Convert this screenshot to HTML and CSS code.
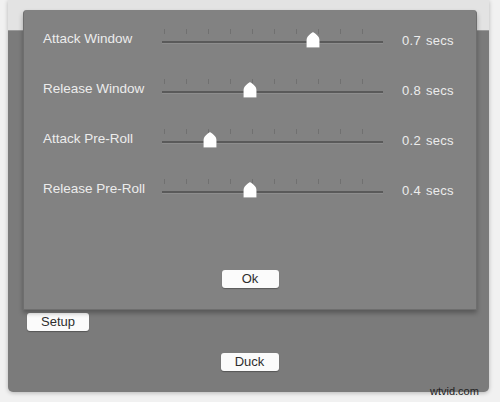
FILE: index.html
```html
<!DOCTYPE html>
<html>
<head>
<meta charset="utf-8">
<link rel="stylesheet" href="styles.css">
</head>
<body>
<div class="window">
  <div class="titlebar"></div>
  <div class="win-body">
    <div class="setup-row"><button class="btn btn-setup">Setup</button></div>
    <div class="duck-row"><button class="btn btn-duck">Duck</button></div>
  </div>
  <div class="sheet">
    <div class="rows">
      <div class="row">
        <span class="label">Attack Window</span>
        <div class="slider"><svg class="thumb" style="left:68.5%" width="16" height="17" viewBox="0 0 16 17"><path d="M1.5 16.5 V9 C1.5 5.5 5 3 8 1 C11 3 14.5 5.5 14.5 9 V16.5 Z" fill="#fff"/></svg></div>
        <span class="value">0.7 secs</span>
      </div>
      <div class="row">
        <span class="label">Release Window</span>
        <div class="slider"><svg class="thumb" style="left:40%" width="16" height="17" viewBox="0 0 16 17"><path d="M1.5 16.5 V9 C1.5 5.5 5 3 8 1 C11 3 14.5 5.5 14.5 9 V16.5 Z" fill="#fff"/></svg></div>
        <span class="value">0.8 secs</span>
      </div>
      <div class="row">
        <span class="label">Attack Pre-Roll</span>
        <div class="slider"><svg class="thumb" style="left:21.5%" width="16" height="17" viewBox="0 0 16 17"><path d="M1.5 16.5 V9 C1.5 5.5 5 3 8 1 C11 3 14.5 5.5 14.5 9 V16.5 Z" fill="#fff"/></svg></div>
        <span class="value">0.2 secs</span>
      </div>
      <div class="row">
        <span class="label">Release Pre-Roll</span>
        <div class="slider"><svg class="thumb" style="left:40%" width="16" height="17" viewBox="0 0 16 17"><path d="M1.5 16.5 V9 C1.5 5.5 5 3 8 1 C11 3 14.5 5.5 14.5 9 V16.5 Z" fill="#fff"/></svg></div>
        <span class="value">0.4 secs</span>
      </div>
    </div>
    <div class="ok-row"><button class="btn btn-ok">Ok</button></div>
  </div>
</div>
<div class="watermark">wtvid.com</div>
</body>
</html>
```

FILE: styles.css
```css
html, body {
  margin: 0;
  padding: 0;
}
body {
  width: 500px;
  height: 402px;
  background: #f1f1f1;
  font-family: "Liberation Sans", Arial, sans-serif;
  position: relative;
  overflow: hidden;
}
.window {
  position: relative;
  margin: 0 11px 0 8px;
  height: 392px;
  background: #7b7b7b;
  border-radius: 0 0 5px 5px;
  box-shadow: 0 1px 4px rgba(0,0,0,0.25);
  display: flex;
  flex-direction: column;
}
.titlebar {
  height: 30px;
  background: #e3e3e3;
  border-bottom: 1px solid #9a9a9a;
}
.win-body {
  flex: 1;
  display: flex;
  flex-direction: column;
  padding-top: 281px;
}
.setup-row {
  padding-left: 19px;
}
.duck-row {
  display: flex;
  justify-content: center;
  padding-top: 22px;
  padding-left: 2px;
}
.btn {
  font-family: "Liberation Sans", Arial, sans-serif;
  font-size: 13px;
  color: #2e2e2e;
  background: #fbfbfb;
  border: none;
  border-radius: 3px;
  height: 18px;
  padding: 0;
  box-shadow: 0 1px 1px rgba(0,0,0,0.3);
  line-height: 18px;
}
.btn-setup {
  width: 62px;
}
.btn-duck {
  width: 58px;
}
.btn-ok {
  width: 57px;
}
.sheet {
  position: absolute;
  left: 15px;
  top: 10px;
  width: 452px;
  height: 299px;
  background: #828282;
  border: 1px solid #6e6e6e;
  border-top: none;
  border-radius: 4px 4px 0 0;
  box-shadow: 0 3px 5px rgba(0,0,0,0.3);
  display: flex;
  flex-direction: column;
}
.rows {
  padding: 4px 0 0 19px;
  display: flex;
  flex-direction: column;
}
.row {
  height: 50px;
  display: grid;
  grid-template-columns: 100px 221px 1fr;
  column-gap: 19px;
  align-items: center;
}
.label {
  font-size: 13.5px;
  color: #ececec;
  margin-top: -1px;
  white-space: nowrap;
}
.value {
  font-size: 13px;
  color: #ececec;
  letter-spacing: 0.3px;
  word-spacing: 1px;
  margin-top: 2px;
}
.slider {
  position: relative;
  height: 24px;
  background-image: repeating-linear-gradient(to right, #707070 0, #707070 1px, transparent 1px, transparent 22px);
  background-size: 100% 5px;
  background-position: 2px 2px;
  background-repeat: no-repeat;
}
.slider::after {
  content: "";
  position: absolute;
  left: 0;
  right: 0;
  top: 14px;
  height: 2px;
  background: #5a5a5a;
  border-bottom: 1px solid #8e8e8e;
}
.thumb {
  position: absolute;
  top: 4px;
  margin-left: -8px;
  z-index: 1;
  filter: drop-shadow(0 0.5px 0.5px rgba(0,0,0,0.35));
}
.ok-row {
  display: flex;
  justify-content: center;
  padding-top: 56px;
}
.watermark {
  position: absolute;
  left: 430px;
  top: 385px;
  font-size: 11px;
  color: #222;
  font-family: "Liberation Sans", Arial, sans-serif;
}
```
